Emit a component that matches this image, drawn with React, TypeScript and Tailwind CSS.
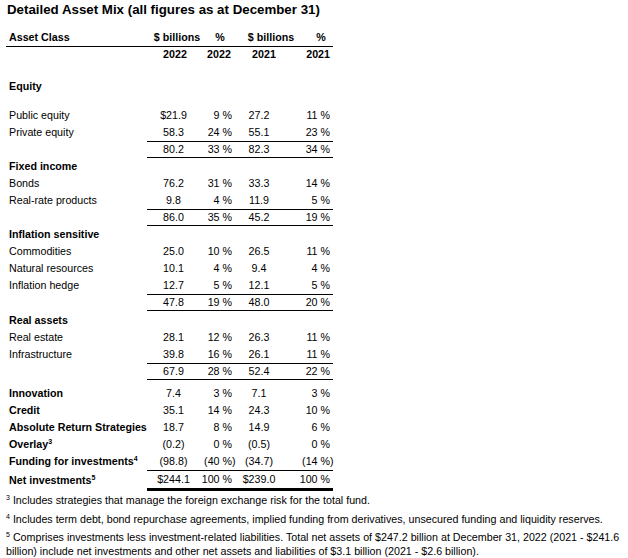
import React from "react";

type Row =
  | { kind: "head"; label: string; h?: string }
  | { kind: "item"; label: string; sup?: string; bold?: boolean; v: [string, string, string, string] }
  | { kind: "sub"; v: [string, string, string, string] }
  | { kind: "gap"; h: string };

const rows: Row[] = [
  { kind: "gap", h: "h-[16px]" },
  { kind: "head", label: "Equity" },
  { kind: "gap", h: "h-[12px]" },
  { kind: "item", label: "Public equity", v: ["$21.9", "9 %", "27.2", "11 %"] },
  { kind: "item", label: "Private equity", v: ["58.3", "24 %", "55.1", "23 %"] },
  { kind: "sub", v: ["80.2", "33 %", "82.3", "34 %"] },
  { kind: "head", label: "Fixed income" },
  { kind: "item", label: "Bonds", v: ["76.2", "31 %", "33.3", "14 %"] },
  { kind: "item", label: "Real-rate products", v: ["9.8", "4 %", "11.9", "5 %"] },
  { kind: "sub", v: ["86.0", "35 %", "45.2", "19 %"] },
  { kind: "head", label: "Inflation sensitive" },
  { kind: "item", label: "Commodities", v: ["25.0", "10 %", "26.5", "11 %"] },
  { kind: "item", label: "Natural resources", v: ["10.1", "4 %", "9.4", "4 %"] },
  { kind: "item", label: "Inflation hedge", v: ["12.7", "5 %", "12.1", "5 %"] },
  { kind: "sub", v: ["47.8", "19 %", "48.0", "20 %"] },
  { kind: "head", label: "Real assets", h: "h-[18px]" },
  { kind: "item", label: "Real estate", v: ["28.1", "12 %", "26.3", "11 %"] },
  { kind: "item", label: "Infrastructure", v: ["39.8", "16 %", "26.1", "11 %"] },
  { kind: "sub", v: ["67.9", "28 %", "52.4", "22 %"] },
  { kind: "gap", h: "h-[5px]" },
  { kind: "item", label: "Innovation", bold: true, v: ["7.4", "3 %", "7.1", "3 %"] },
  { kind: "item", label: "Credit", bold: true, v: ["35.1", "14 %", "24.3", "10 %"] },
  { kind: "item", label: "Absolute Return Strategies", bold: true, v: ["18.7", "8 %", "14.9", "6 %"] },
  { kind: "item", label: "Overlay", sup: "3", bold: true, v: ["(0.2)", "0 %", "(0.5)", "0 %"] },
  { kind: "item", label: "Funding for investments", sup: "4", bold: true, v: ["(98.8)", "(40 %)", "(34.7)", "(14 %)"] },
];

// percent cells: closing bracket hangs past the right edge
function Pct({ v }: { v: string }) {
  if (v.endsWith(")")) {
    return (
      <>
        {v.slice(0, -1)}
        <span className="inline-block w-0">)</span>
      </>
    );
  }
  return <>{v}</>;
}

function Values({ v }: { v: [string, string, string, string] }) {
  return (
    <>
      <div className="text-center">{v[0]}</div>
      <div className="text-right pr-[8px]">
        <Pct v={v[1]} />
      </div>
      <div className="text-center">{v[2]}</div>
      <div className="text-right pr-[3px]">
        <Pct v={v[3]} />
      </div>
    </>
  );
}

function Label({ label, sup, bold }: { label: string; sup?: string; bold?: boolean }) {
  return (
    <div className={`pl-[3px] whitespace-nowrap ${bold ? "font-bold" : ""}`}>
      {label}
      {sup && <sup className="text-[7px] -top-[4px]">{sup}</sup>}
    </div>
  );
}

function Note({ n }: { n: string }) {
  return <sup className="text-[7px] -top-[4px]">{n}</sup>;
}

const grid = "grid grid-cols-[141px_53px_40px_38px_55px] items-center";

export default function App() {
  return (
    <div
      className="w-[628px] h-[558px] bg-white text-black px-[6px] overflow-hidden"
      style={{ fontFamily: '"Liberation Sans", Arial, sans-serif' }}
    >
      <h1 className="h-[20px] leading-[20px] text-[13.3px] font-bold pl-[1px]">
        Detailed Asset Mix (all figures as at December 31)
      </h1>

      <div className="w-[327px] mt-[9px] text-[10.7px] leading-[13px]">
        {/* column headings */}
        <div className="grid grid-cols-[141px_60px_26px_76px_24px] items-center h-[18px] border-b border-black font-bold">
          <div className="pl-[3px]">Asset Class</div>
          <div className="text-center">$ billions</div>
          <div className="text-center">%</div>
          <div className="text-center">$ billions</div>
          <div className="text-center">%</div>
        </div>
        <div className="grid grid-cols-[141px_56px_32px_58px_40px] items-center h-[15px] font-bold">
          <div />
          <div className="text-center">2022</div>
          <div className="text-center">2022</div>
          <div className="text-center">2021</div>
          <div className="text-right pr-[3px]">2021</div>
        </div>

        {rows.map((r, i) => {
          if (r.kind === "gap") return <div key={i} className={r.h} />;
          if (r.kind === "head")
            return (
              <div key={i} className={`${grid} ${r.h ?? "h-[17px]"}`}>
                <Label label={r.label} bold />
              </div>
            );
          if (r.kind === "item")
            return (
              <div key={i} className={`${grid} h-[17px]`}>
                <Label label={r.label} sup={r.sup} bold={r.bold} />
                <Values v={r.v} />
              </div>
            );
          return (
            <div key={i} className="flex h-[17px]">
              <div className="w-[141px]" />
              <div className="grid grid-cols-[53px_40px_38px_55px] items-center flex-1 border-y border-black">
                <Values v={r.v} />
              </div>
            </div>
          );
        })}

        {/* total */}
        <div className="flex h-[21px]">
          <div className="w-[141px] flex items-center">
            <Label label="Net investments" sup="5" bold />
          </div>
          <div className="grid grid-cols-[53px_40px_38px_55px] items-center flex-1 border-t border-b-[3px] border-b-double border-black">
            <Values v={["$244.1", "100 %", "$239.0", "100 %"]} />
          </div>
        </div>
      </div>

      {/* footnotes */}
      <div className="text-[10.7px] leading-[14px] mt-[2px]">
        <p className="h-[19px] whitespace-nowrap">
          <Note n="3" /> Includes strategies that manage the foreign exchange risk for the total fund.
        </p>
        <p className="h-[18px] whitespace-nowrap">
          <Note n="4" /> Includes term debt, bond repurchase agreements, implied funding from derivatives, unsecured funding and liquidity reserves.
        </p>
        <p className="whitespace-nowrap">
          <Note n="5" /> Comprises investments less investment-related liabilities. Total net assets of $247.2 billion at December 31, 2022 (2021 - $241.6
          <br />
          billion) include net investments and other net assets and liabilities of $3.1 billion (2021 - $2.6 billion).
        </p>
      </div>
    </div>
  );
}
